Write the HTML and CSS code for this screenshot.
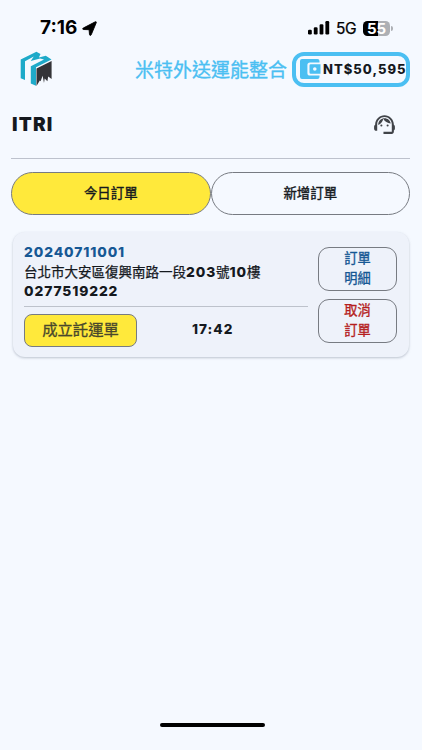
FILE: index.html
```html
<!DOCTYPE html>
<html lang="zh-Hant">
<head>
<meta charset="utf-8">
<title>米特外送運能整合</title>
<link rel="stylesheet" href="styles.css">
</head>
<body>
<div class="status">
  <span class="time">7:16</span>
  <svg class="location" width="15" height="15" viewBox="0 0 15 15"><path stroke="#000" stroke-width=".9" stroke-linejoin="round" d="M1.2 7.1 13.3.8c.8-.4 1.3.3.9 1L9.2 13.8c-.4.9-1.6.8-1.7-.2L7.1 8.7 1.4 8.5C.5 8.4.4 7.6 1.2 7.1z"/></svg>
  <svg class="signal" width="22" height="14" viewBox="0 0 22 14"><rect x="0" y="8.7" width="3.8" height="4.8" rx="1.2"/><rect x="5.8" y="6.2" width="3.8" height="7.3" rx="1.2"/><rect x="11.6" y="3.2" width="3.8" height="10.3" rx="1.2"/><rect x="17.4" y="0" width="3.8" height="13.5" rx="1.2"/></svg>
  <span class="network">5G</span>
  <span class="battery">55</span>
  <span class="battery-tip"></span>
</div>
<header class="header">
  <svg class="logo" width="32" height="36" viewBox="20 51 32 36">
    <path fill="#1eaac9" d="M20.7 59.6 36.4 51.8 40.5 54 38.9 57.4 45.8 55.7 51.5 59.5 36 67.3V85.7L30.8 83.5V66.2L44 59.4 40.1 58.4 30.7 61.1 33.8 56.5 25 61.3V80L20.7 78.2z"/>
    <path fill="#343438" d="M36.5 68.5 51.6 61.1V79L48.2 76.4 47.4 81.2 44.7 78.4 44 83 42.6 75.8 40.6 81.2 39.8 80.5 36.5 86z"/>
  </svg>
  <h1 class="title">米特外送運能整合</h1>
  <div class="wallet">
    <svg width="22" height="20" viewBox="0 0 22 20"><path fill="#4bbff2" d="M2 0H17.5Q19.5 0 19.5 2V3.4H10Q7.4 3.4 7.4 6V14Q7.4 16.6 10 16.6H19.5V18Q19.5 20 17.5 20H2Q0 20 0 18V2Q0 0 2 0z"/><path fill="#4bbff2" fill-rule="evenodd" d="M10.7 5.3H20.5V14.7H10.7Q9.5 14.7 9.5 13.5V6.5Q9.5 5.3 10.7 5.3zM14.8 8.2a1.8 1.8 0 1 0 0 3.6 1.8 1.8 0 0 0 0-3.6z"/></svg>
    <span>NT$50,595</span>
  </div>
</header>
<section class="account">
  <h2>ITRI</h2>
  <svg class="agent" width="25" height="25" viewBox="0 0 24 24" fill="#414449"><path d="M21 12.22C21 6.73 16.74 3 12 3c-4.69 0-9 3.65-9 9.28-.6.34-1 .98-1 1.72v2c0 1.1.9 2 2 2h1v-6.1c0-3.87 3.13-7 7-7s7 3.13 7 7V19h-8v2h8c1.1 0 2-.9 2-2v-1.22c.59-.31 1-.92 1-1.64v-2.3c0-.7-.41-1.31-1-1.62z"/><circle cx="9" cy="13" r="1"/><circle cx="15" cy="13" r="1"/><path d="M18 11.03C17.52 8.18 15.04 6 12.05 6c-3.03 0-6.29 2.51-6.03 6.45 2.47-1.01 4.33-3.21 4.86-5.89 1.31 2.63 4 4.44 7.12 4.47z"/></svg>
</section>
<nav class="tabs">
  <button class="tab active">今日訂單</button>
  <button class="tab">新增訂單</button>
</nav>
<main class="card">
  <div class="order">
    <div class="order-id">20240711001</div>
    <div class="address">台北市大安區復興南路一段<b>203</b>號<b>10</b>樓</div>
    <div class="phone">0277519222</div>
    <div class="order-foot">
      <button class="create">成立託運單</button>
      <span class="order-time">17:42</span>
    </div>
  </div>
  <div class="actions">
    <button class="action detail">訂單<br>明細</button>
    <button class="action cancel">取消<br>訂單</button>
  </div>
</main>
<div class="home"></div>
</body>
</html>
```
FILE: styles.css
```css
* { box-sizing: border-box; }
body {
  margin: 0;
  width: 422px;
  height: 750px;
  overflow: hidden;
  display: flex;
  flex-direction: column;
  background: #f5f9ff;
  color: #15191e;
  font-family: Inter, "Noto Sans CJK TC", sans-serif;
}
h1, h2 { margin: 0; }
button { font: inherit; color: inherit; padding: 0; background: none; border: 1px solid #777b82; }
svg { display: block; flex: none; }

.status { height: 50px; padding: 6px 29px 0 40px; display: flex; align-items: center; color: #000; }
.time { width: 42px; font-size: 19px; font-weight: 650; line-height: 22px; }
.location { margin-left: 0; }
.signal { margin-left: auto; }
.network { margin-left: 6px; width: 27px; font-size: 15.5px; letter-spacing: -.3px; -webkit-text-stroke: .25px; }
.battery {
  width: 27px; height: 15px; border-radius: 4.5px;
  background: linear-gradient(90deg, #000 55%, #adb0b5 55%);
  color: #fff; font-size: 15px; font-weight: 700; line-height: 15px; text-align: center;
}
.battery-tip { width: 2px; height: 5px; margin-left: 1px; border-radius: 0 2px 2px 0; background: #adb0b5; }

.header { height: 38px; padding: 0 12px 0 20px; display: flex; align-items: center; }
.title { margin: 3px 0 0 83px; font-size: 19px; line-height: 28px; font-weight: 400; color: #4bbff2; -webkit-text-stroke: .35px; white-space: nowrap; }
.wallet {
  width: 118px; height: 35px; margin-left: auto; padding-left: 4px;
  border: 4px solid #4bbff2; border-radius: 12px;
  display: flex; align-items: center;
  font-size: 13px; font-weight: 800; letter-spacing: 1px; white-space: nowrap;
}
.wallet span { margin-left: 1px; }

.account { height: 71px; margin: 0 12px 0 11px; padding: 2px 13px 0 1px; display: flex; align-items: center; justify-content: space-between; border-bottom: 1px solid #bdc2cd; }
.account h2 { margin-top: 1px; font-size: 19px; font-weight: 900; letter-spacing: 1.2px; }

.tabs { display: flex; margin: 13px 12px 0 11px; }
.tab { flex: 1; height: 43px; padding-bottom: 3px; border-radius: 22px; font-size: 13.4px; -webkit-text-stroke: .4px; }
.tab.active { background: #ffe93b; }

.card {
  height: 125px; margin: 17px 13px 0; padding: 11px 11px 0;
  display: flex; justify-content: space-between;
  border-radius: 12px; background: #eef2fa;
  box-shadow: 0 1px 2px #8f98a855, 0 1px 3px #8f98a844;
}
.order { width: 284px; }
.order-id, .phone, .address { height: 19.5px; line-height: 19.5px; white-space: nowrap; }
.order-id, .phone, .order-time { font-size: 13.8px; font-weight: 800; letter-spacing: .9px; }
.order-id { color: #165894; }
.address { font-size: 13.5px; -webkit-text-stroke: .25px; }
.address b { font-size: 13.8px; font-weight: 800; letter-spacing: .9px; -webkit-text-stroke: 0; }
.order-foot { height: 39px; margin-top: 4px; padding-top: 7px; display: flex; border-top: 1px solid #bdc2cb; }
.create { width: 113px; height: 33px; padding-bottom: 4px; border-radius: 8px; background: #ffe93b; color: #49482c; font-size: 15.3px; -webkit-text-stroke: .3px; }
.order-time { margin-left: 55px; line-height: 31px; font-size: 13.6px; letter-spacing: 1px; }

.actions { width: 79px; margin-right: 1px; padding-top: 4px; display: flex; flex-direction: column; gap: 8px; }
.action { height: 44px; padding-bottom: 1px; border-radius: 11px; font-size: 13.2px; line-height: 19.5px; -webkit-text-stroke: .35px; }
.detail { color: #165894; }
.cancel { color: #b51e1e; }

.home { width: 105px; height: 4px; margin: auto 157px 23px 160px; border-radius: 2px; background: #000; }
```
